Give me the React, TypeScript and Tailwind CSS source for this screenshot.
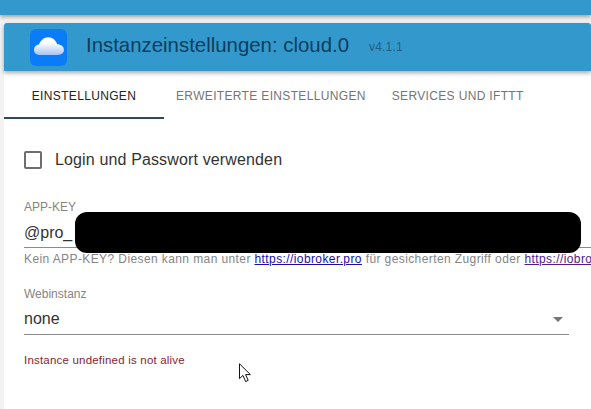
import React from 'react';

function CloudLogo() {
  return (
    <svg width="37" height="37" viewBox="0 0 37 37" className="shrink-0">
      <defs>
        <linearGradient id="cloudFill" x1="0" y1="0" x2="0" y2="1">
          <stop offset="0.3" stopColor="#ffffff" />
          <stop offset="1" stopColor="#a9c4f2" />
        </linearGradient>
      </defs>
      <rect width="37" height="37" rx="6" fill="#0a7cf7" />
      <path
        d="M9.5 26C6 26 4 23.6 4 20.8C4 18 6 15.6 9 15.4C10.4 11.6 13.8 8.2 18.2 8.2C22.6 8.2 25.8 11.4 27.2 15.2C31 15.2 34 17.6 34 20.8C34 23.8 31.6 26 27.8 26Z"
        fill="url(#cloudFill)"
      />
    </svg>
  );
}

function Cursor() {
  return (
    <svg width="13" height="20" viewBox="0 0 13 20" className="absolute left-[239px] top-[363px]">
      <path d="M0.5 0.8V15.6L4 12.4L6.6 18.6L9.2 17.4L6.6 11.6H11.4Z" fill="#ffffff" stroke="#111111" strokeWidth="1" />
    </svg>
  );
}

export default function App() {
  return (
    <div className="relative h-[409px] w-[591px] overflow-hidden bg-[#f3f3f3] font-['Liberation_Sans',Arial,sans-serif]">
      <div className="h-[15px] bg-[#3399cc] shadow-[0_2px_4px_rgba(0,0,0,0.35)]" />
      <div className="ml-1 mt-2 h-[386px] bg-white">
        <div className="flex h-12 items-center rounded-t-[3px] bg-[#3399cc] pl-[26px] shadow-[0_2px_4px_rgba(0,0,0,0.35)]">
          <CloudLogo />
          <span className="mb-[3px] ml-[19px] text-[20.4px] leading-none text-[#0f3d5e]">Instanzeinstellungen: cloud.0</span>
          <span className="ml-5 text-xs leading-none tracking-[0.2px] text-[#1f5f86]">v4.1.1</span>
        </div>

        <div className="flex h-[48px] text-xs tracking-[0.34px] text-[#757575]">
          <div className="flex w-40 items-center justify-center border-b-2 border-[#2c4a5e] pt-[3px] text-[#222222]">EINSTELLUNGEN</div>
          <div className="ml-3 flex items-center pt-[1px]">ERWEITERTE EINSTELLUNGEN</div>
          <div className="ml-[26px] flex items-center pt-[1px]">SERVICES UND IFTTT</div>
        </div>

        <div className="pl-5">
          <label className="mt-[31px] flex items-center text-base leading-5 tracking-[0.14px] text-[#333333]">
            <span className="mr-[13px] h-[18px] w-[18px] rounded-[2px] border-2 border-[#6e6e6e]" />
            Login und Passwort verwenden
          </label>

          <div className="mt-[30px] text-xs leading-[14px] text-[#858585]">APP-KEY</div>
          <div className="mt-[3px] h-[31px] border-b border-[#8a8a8a] text-base leading-[32px] text-[#333333]">@pro_</div>
          <div className="mt-1 overflow-hidden whitespace-nowrap text-xs leading-[14px] tracking-[0.4px] text-[#858585]">
            Kein APP-KEY? Diesen kann man unter{' '}
            <a className="text-[#1a0dab] underline">https://iobroker.pro</a> für gesicherten Zugriff oder{' '}
            <a className="text-[#551a8b] underline">https://iobroker.net</a>
          </div>

          <div className="mt-[21px] text-xs leading-[14px] text-[#858585]">Webinstanz</div>
          <div className="mt-[3px] flex h-[31px] w-[545px] items-center justify-between border-b border-[#8a8a8a] pr-[6px] text-base text-[#333333]">
            <span>none</span>
            <span className="h-0 w-0 border-x-[5px] border-t-[5px] border-x-transparent border-t-[#757575]" />
          </div>
          <div className="mt-[18px] text-[11.5px] leading-[14px] tracking-[0.2px] text-[#8b2233]">Instance undefined is not alive</div>
        </div>
      </div>

      <div className="absolute left-[75px] top-[212px] h-[41px] w-[506px] rounded-xl bg-black" />
      <Cursor />
    </div>
  );
}
